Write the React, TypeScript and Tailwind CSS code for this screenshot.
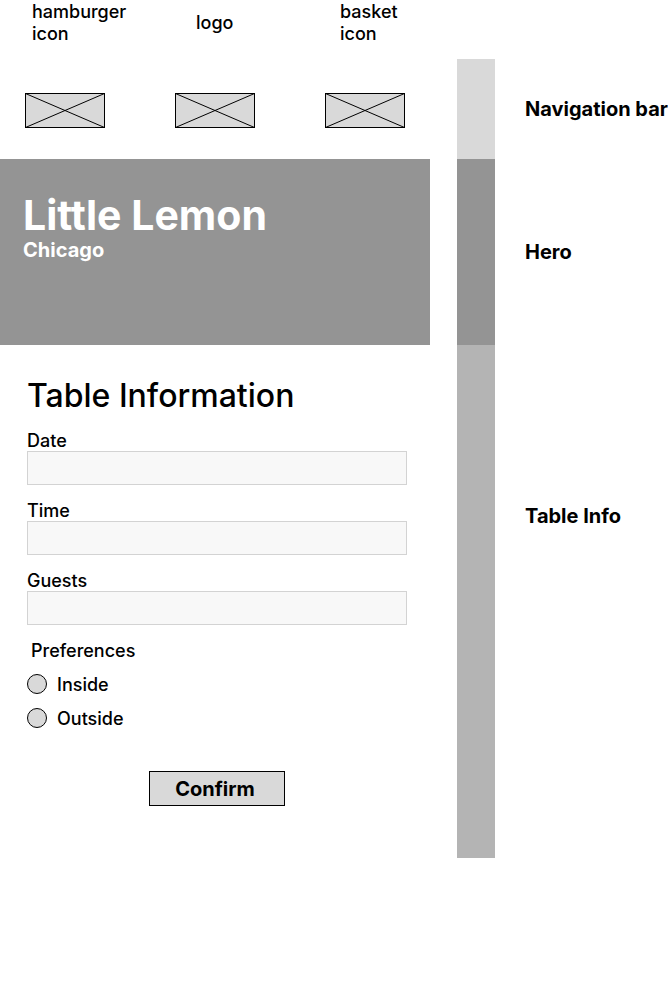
import React from "react";

const placeholders = [
  { label: "hamburger icon", pad: "pl-[7px]" },
  { label: "logo", pad: "pl-[21px]" },
  { label: "basket icon", pad: "pl-[15px]" },
];

const fields = [
  { id: "date", label: "Date" },
  { id: "time", label: "Time" },
  { id: "guests", label: "Guests" },
];

function PlaceholderBox() {
  return (
    <svg className="block h-[35px] w-20" viewBox="0 0 80 35" aria-hidden="true">
      <rect x="0.5" y="0.5" width="79" height="34" fill="#d9d9d9" stroke="#000" />
      <path d="M0.5 0.5L79.5 34.5M79.5 0.5L0.5 34.5" stroke="#000" fill="none" />
    </svg>
  );
}

export default function App() {
  return (
    <div className="flex min-h-screen items-start overflow-hidden bg-white font-['Inter',sans-serif] text-black">
      <main className="w-[430px] shrink-0">
        <nav className="flex items-start justify-between px-[25px] pb-[31px] text-lg leading-[22px] font-medium">
          {placeholders.map((p) => (
            <button key={p.label} type="button" className="flex w-20 flex-col items-start text-left">
              <span className={`flex h-[46px] items-center ${p.pad}`}>{p.label}</span>
              <span className="mt-[47px] block">
                <PlaceholderBox />
              </span>
            </button>
          ))}
        </nav>

        <header className="h-[186px] bg-[#949494] px-[23px] pt-8 text-white">
          <h1 className="text-[41px] leading-[48px] font-bold">Little Lemon</h1>
          <p className="text-xl leading-[22px] font-bold">Chicago</p>
        </header>

        <form className="pt-[31px] pr-[23px] pl-[27px] text-lg leading-5 font-medium" onSubmit={(e) => e.preventDefault()}>
          <h2 className="mb-4 text-[32px] leading-[39px]">Table Information</h2>
          <div className="flex flex-col gap-4">
            {fields.map((f) => (
              <div key={f.id}>
                <label htmlFor={f.id} className="block">{f.label}</label>
                <input id={f.id} type="text" className="block h-[34px] w-full border border-[#d3d3d3] bg-[#f8f8f8] px-2" />
              </div>
            ))}
          </div>
          <fieldset className="mt-4">
            <legend className="pl-1">Preferences</legend>
            <div className="flex flex-col gap-3 pt-[13px]">
              {["Inside", "Outside"].map((name) => (
                <label key={name} className="flex items-start gap-[10px] leading-[22px]">
                  <input
                    type="radio"
                    name="preference"
                    className="size-5 appearance-none rounded-full border border-black bg-[#d9d9d9] checked:bg-[#949494]"
                  />
                  {name}
                </label>
              ))}
            </div>
          </fieldset>
          <button type="submit" className="mx-auto mt-[41px] block h-[35px] w-[136px] border border-black bg-[#d9d9d9] pr-1 text-xl font-bold">
            Confirm
          </button>
        </form>
      </main>

      <aside className="mt-[59px] ml-[27px] flex-1 text-xl leading-6 font-bold whitespace-nowrap">
        <div className="flex h-[100px] items-center gap-[30px]">
          <div className="h-full w-[38px] shrink-0 bg-[#d9d9d9]" />
          <p>Navigation bar</p>
        </div>
        <div className="flex h-[186px] items-center gap-[30px]">
          <div className="h-full w-[38px] shrink-0 bg-[#949494]" />
          <p>Hero</p>
        </div>
        <div className="flex h-[513px] items-start gap-[30px]">
          <div className="h-full w-[38px] shrink-0 bg-[#b4b4b4]" />
          <p className="pt-[159px]">Table Info</p>
        </div>
      </aside>
    </div>
  );
}
